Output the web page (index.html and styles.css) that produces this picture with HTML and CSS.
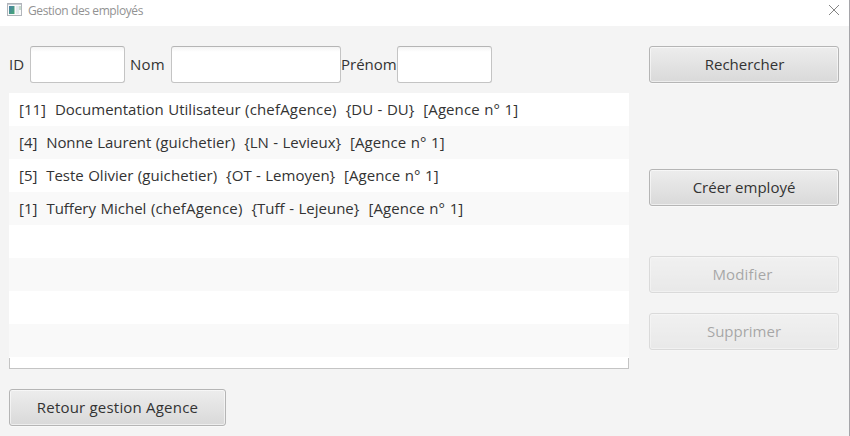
FILE: index.html
```html
<!DOCTYPE html>
<html lang="fr">
<head>
<meta charset="utf-8">
<title>Gestion des employés</title>
<link rel="stylesheet" href="styles.css">
</head>
<body>
<div class="window">
  <header class="titlebar">
    <svg class="app-icon" width="16" height="14" viewBox="0 0 16 14">
      <defs><linearGradient id="pane" x1="0" y1="0" x2="1" y2="1"><stop offset="0" stop-color="#4a7fa8"/><stop offset="1" stop-color="#45a875"/></linearGradient></defs>
      <rect x=".5" y=".5" width="14" height="12" fill="#fafafa" stroke="#b1b5bb"/>
      <path d="M1 1.5h13" stroke="#c9cdd4"/>
      <rect x="2" y="3" width="5" height="8" fill="url(#pane)"/>
      <path d="M7.500 3v8" stroke="#a9cdbd"/>
      <rect x="9" y="3" width="3" height="8" fill="#e4eaee"/>
      <rect x="12" y="3" width="2" height="4" fill="#c5dccd"/>
    </svg>
    <h1 class="title">Gestion des employés</h1>
    <svg class="close" width="12" height="12" viewBox="0 0 12 12"><path d="M1 1l10 10M11 1L1 11" stroke="#858585" fill="none"/></svg>
  </header>
  <main class="content">
    <section class="left">
      <div class="search">
        <label class="label label-id" for="id">ID</label><input class="field" id="id">
        <label class="label label-nom" for="nom">Nom</label><input class="field field-wide" id="nom">
        <label class="label label-prenom" for="prenom">Prénom</label><input class="field" id="prenom">
      </div>
      <ul class="list">
        <li class="row">[11]  Documentation Utilisateur <span class="role">(chefAgence)</span>  {DU - DU}  <span class="agency">[Agence n° 1]</span></li>
        <li class="row guichetier">[4]  <span class="name-tight">Nonne Laurent</span> <span class="role">(guichetier)</span>  {LN - Levieux}  <span class="agency">[Agence n° 1]</span></li>
        <li class="row guichetier">[5]  Teste Olivier <span class="role">(guichetier)</span>  {OT - Lemoyen}  <span class="agency">[Agence n° 1]</span></li>
        <li class="row">[1]  Tuffery Michel <span class="role">(chefAgence)</span>  {Tuff - Lejeune}  <span class="agency">[Agence n° 1]</span></li>
        <li class="row"></li><li class="row"></li><li class="row"></li><li class="row"></li>
        <li class="list-end"></li>
      </ul>
      <button class="button back">Retour gestion Agence</button>
    </section>
    <aside class="actions">
      <button class="button search-button">Rechercher</button>
      <button class="button create">Créer employé</button>
      <button class="button modify" disabled>Modifier</button>
      <button class="button delete" disabled>Supprimer</button>
    </aside>
  </main>
  <span class="edge-marks"></span>
</div>
</body>
</html>
```

FILE: styles.css
```css
* { box-sizing: border-box; }
body { margin: 0; font: 15px/20px "Open Sans", "Noto Sans", sans-serif; color: #333; }
.window { position: relative; width: 850px; height: 436px; background: #f4f4f4; overflow: hidden; border-right: 1px solid #a5a5a9; }
.edge-marks { position: absolute; top: 40px; right: -1px; width: 1px; height: 6px; background: repeating-linear-gradient(#444 0 1px, #b8b8bb 1px 2.500px); }
.titlebar { height: 26px; background: #fff; display: flex; align-items: flex-start; padding: 3px 9px 0 7px; }
.app-icon { flex: none; }
.title { margin: 0 0 0 5px; font-size: 12px; line-height: 16px; font-weight: 400; letter-spacing: -.4px; color: #929292; }
.close { margin: 1px 0 0 auto; }
.content { display: flex; gap: 20px; padding: 20px 10px 0 9px; }
.left { width: 620px; }
.search { display: flex; align-items: center; height: 37px; }
.label { flex: none; white-space: nowrap; padding-bottom: 2px; }
.label-id { width: 21px; }
.label-nom { width: 46px; padding-left: 5px; letter-spacing: .2px; }
.label-prenom { width: 56px; }
.field { width: 95px; height: 37px; padding: 0 8px; border: 1px solid #c4c4c4; border-top-color: #b5b5b5; border-radius: 3px; background: linear-gradient(#f4f4f4, #fff 5px); font: inherit; outline: none; }
.field-wide { width: 170px; }
.list { list-style: none; margin: 10px 0 20px; padding: 0; }
.row { height: 33px; padding: 6px 10px 7px; white-space: pre; word-spacing: .6px; background: #fff; }
.row:nth-child(even) { background: #f9f9f9; }
.role { letter-spacing: .17px; }
.guichetier { word-spacing: .5px; }
.guichetier .role { letter-spacing: .1px; }
.agency { letter-spacing: .08px; }
.name-tight { letter-spacing: -.07px; }
.list-end { height: 12px; border: solid #c4c4c4; border-width: 0 1px 1px; border-image: linear-gradient(#fff 2px, #c4c4c4 2px) 1; background: #fff; }
.button { display: block; width: 190px; height: 37px; padding: 0 0 1px; border: 1px solid #b5b5b5; border-radius: 3px; background: linear-gradient(#ededed, #d9d9d9); box-shadow: inset 0 0 0 1px rgba(255,255,255,.55), 0 1px 0 #f9f9f9; font: inherit; color: #333; }
.button:disabled { opacity: .4; }
.search-button { padding-left: 1px; }
.back { width: 217px; letter-spacing: .2px; }
.create { margin-top: 86px; }
.modify { margin-top: 50px; padding-right: 3px; letter-spacing: .15px; }
.delete { margin-top: 20px; }
```
